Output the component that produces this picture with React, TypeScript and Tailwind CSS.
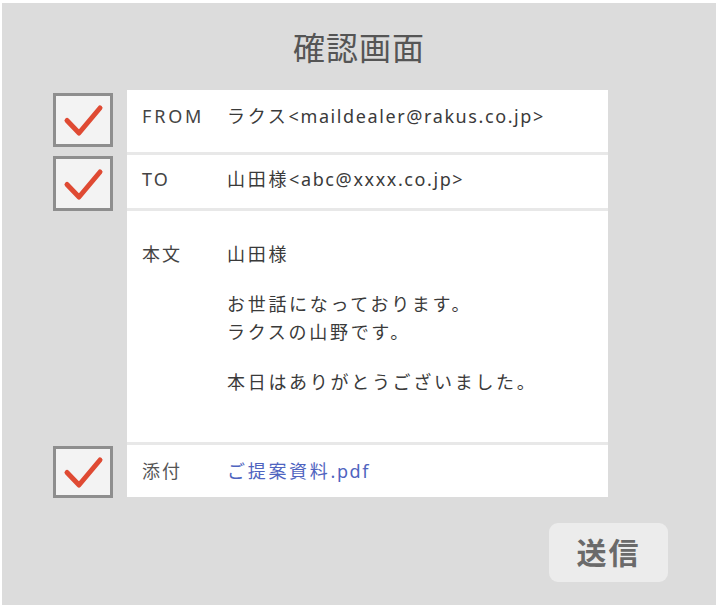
import React from "react";

const font = { fontFamily: '"Noto Sans", "Noto Sans CJK JP", sans-serif' };

function Check({ className = "" }: { className?: string }) {
  return (
    <div
      className={`w-[60px] shrink-0 border-[3px] border-[#8e8e8e] bg-[#f3f3f3] flex items-center justify-center ${className}`}
    >
      <svg width="54" height="48" viewBox="0 0 54 48" className="block shrink-0">
        <path
          d="M11 24.5 L23 37 L44 12"
          fill="none"
          stroke="#df4a33"
          strokeWidth="5"
          strokeLinecap="round"
          strokeLinejoin="round"
        />
      </svg>
    </div>
  );
}

const L = ({ children }: { children: React.ReactNode }) => (
  <span className="tracking-[1.6px]">{children}</span>
);

export default function App() {
  return (
    <div
      className="w-[720px] h-[610px] bg-white pt-[3px] pl-[2px] pr-[4px] pb-[5px]"
      style={font}
    >
      <div className="h-[602px] bg-[#dcdcdc] flex flex-col">
        <div className="pt-[25px] h-[87px] text-center text-[32px] leading-[40px] tracking-[1px] text-[#555555]">
          確認画面
        </div>
        <div className="ml-[51px] w-[555px] flex flex-col text-[18px] leading-[28px] tracking-[2.7px] text-[#3a3a3a]">
          {/* FROM */}
          <div className="flex items-start gap-[14px]">
            <Check className="h-[54px] mt-[3px]" />
            <div className="w-[481px] h-[62px] bg-white flex pl-[15px] pt-[12px] whitespace-nowrap">
              <span className="w-[85px] shrink-0 text-[#444] tracking-[2.8px]">FROM</span>
              <span>
                ラクス<L>&lt;maildealer@rakus.co.jp&gt;</L>
              </span>
            </div>
          </div>
          {/* TO */}
          <div className="flex items-start gap-[14px]">
            <Check className="h-[55px] mt-[4px] -mb-[3px]" />
            <div className="w-[481px] h-[56px] bg-white border-t-[3px] border-[#e8e8e8] flex pl-[15px] pt-[10px] whitespace-nowrap">
              <span className="w-[85px] shrink-0 text-[#444] tracking-[2px]">TO</span>
              <span>
                山田様<L>&lt;abc@xxxx.co.jp&gt;</L>
              </span>
            </div>
          </div>
          {/* Body */}
          <div className="flex items-start gap-[14px]">
            <div className="w-[60px] shrink-0" />
            <div className="w-[481px] h-[234px] bg-white border-t-[3px] border-[#e8e8e8] flex pl-[15px] pt-[29px]">
              <span className="w-[85px] shrink-0 text-[#444] tracking-[2px]">本文</span>
              <div className="flex flex-col gap-[22px]">
                <p>山田様</p>
                <p>
                  お世話になっております。
                  <br />
                  ラクスの山野です。
                </p>
                <p>本日はありがとうございました。</p>
              </div>
            </div>
          </div>
          {/* Attach */}
          <div className="flex items-start gap-[14px]">
            <Check className="h-[52px] mt-[4px] -mb-[1px]" />
            <div className="w-[481px] h-[55px] bg-white border-t-[3px] border-[#e8e8e8] flex items-center pl-[15px]">
              <span className="w-[85px] shrink-0 text-[#555] tracking-[2px]">添付</span>
              <span className="text-[#4f64c0]">
                ご提案資料<L>.pdf</L>
              </span>
            </div>
          </div>
        </div>
        <div className="flex justify-end pr-[48px] mt-[26px]">
          <button className="w-[119px] h-[59px] rounded-[9px] bg-[#ececec] text-[30px] leading-[40px] tracking-[2px] font-bold text-[#6a6a6a] flex items-center justify-center">
            送信
          </button>
        </div>
      </div>
    </div>
  );
}
